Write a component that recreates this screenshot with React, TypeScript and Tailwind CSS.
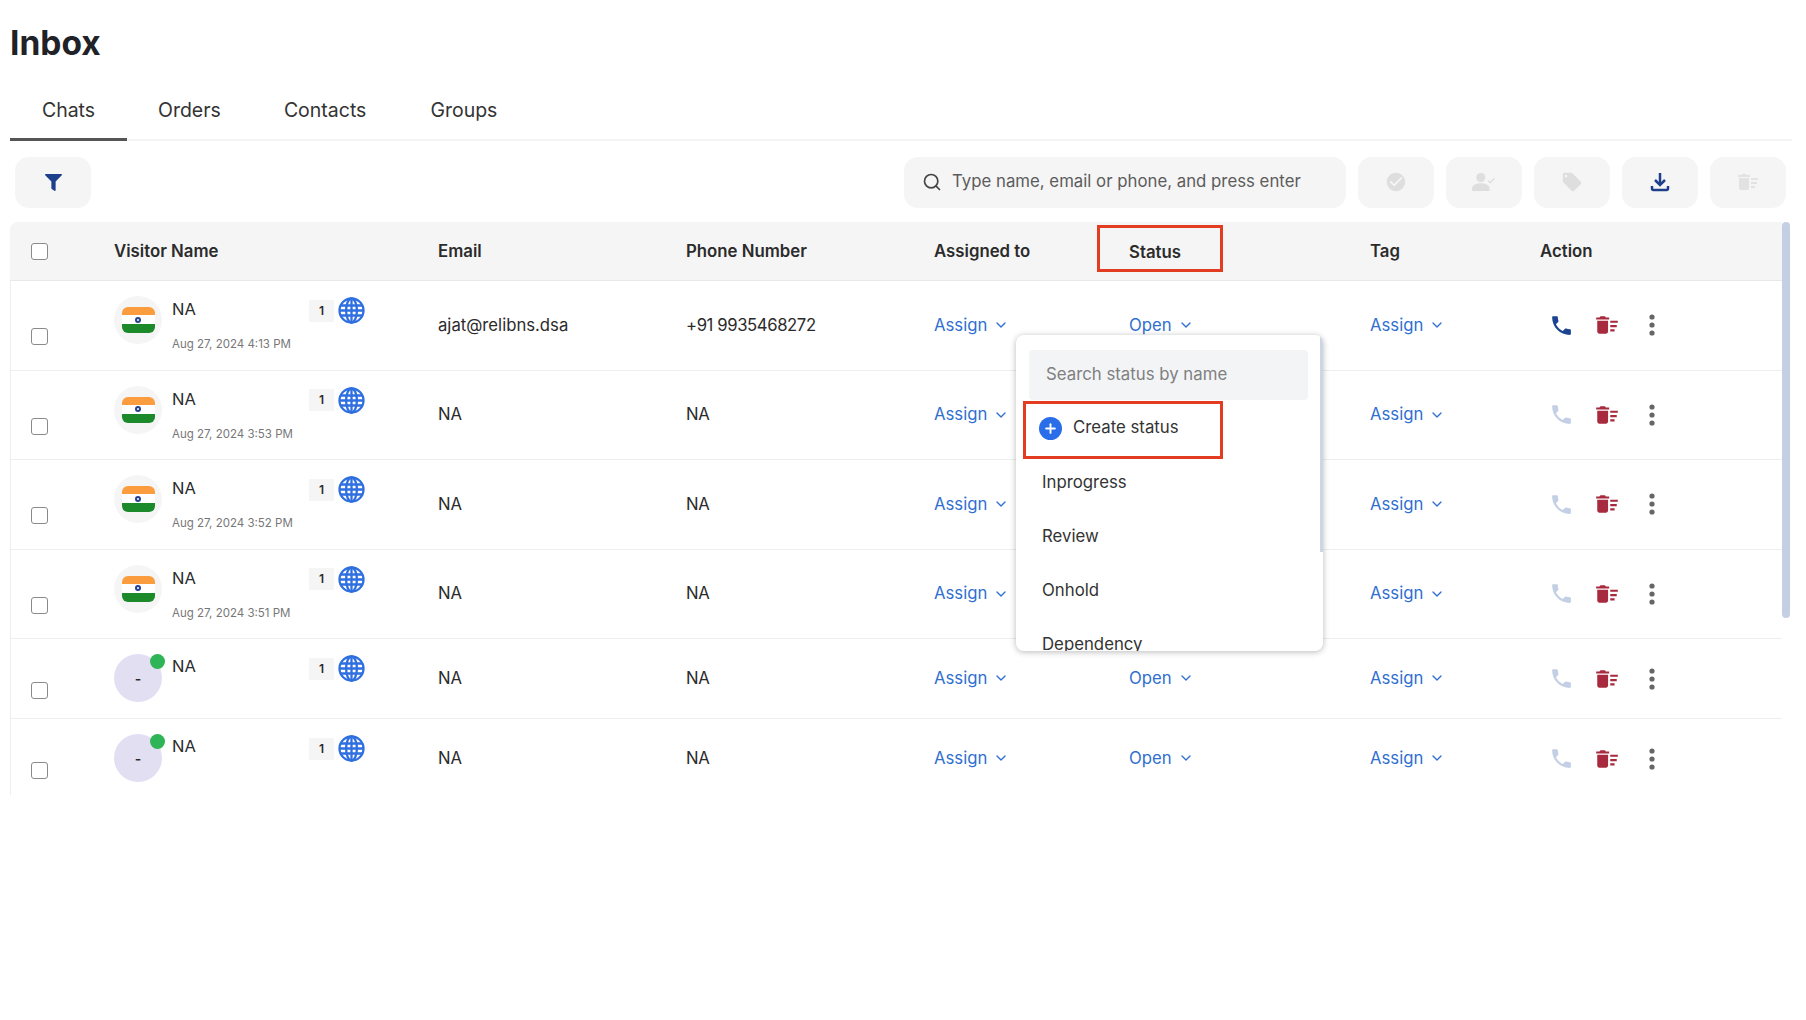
import { FaFilter } from "react-icons/fa";
import { MdCheckCircle, MdDeleteSweep, MdLocalOffer, MdPhone } from "react-icons/md";
import { ChevronDown, Plus, Search } from "lucide-react";
import type { ReactNode } from "react";

type Visitor = {
  flag: boolean;
  date?: string;
  email: string;
  phone: string;
  called: boolean;
  status: boolean;
};

const visitors: Visitor[] = [
  { flag: true, date: "Aug 27, 2024 4:13 PM", email: "ajat@relibns.dsa", phone: "+91 9935468272", called: true, status: true },
  { flag: true, date: "Aug 27, 2024 3:53 PM", email: "NA", phone: "NA", called: false, status: false },
  { flag: true, date: "Aug 27, 2024 3:52 PM", email: "NA", phone: "NA", called: false, status: false },
  { flag: true, date: "Aug 27, 2024 3:51 PM", email: "NA", phone: "NA", called: false, status: false },
  { flag: false, email: "NA", phone: "NA", called: false, status: true },
  { flag: false, email: "NA", phone: "NA", called: false, status: true },
];

const gridCols = "grid grid-cols-[104px_324px_248px_248px_195px_241px_170px_1fr]";

function Globe() {
  return (
    <svg viewBox="0 0 27 27" className="h-[27px] w-[27px] shrink-0" fill="none" stroke="#2f6fdf" strokeWidth="2.3">
      <circle cx="13.5" cy="13.5" r="12" />
      <ellipse cx="13.5" cy="13.5" rx="5.4" ry="12" />
      <path d="M13.5 1.5v24M3 8.5h21M1.5 13.5h24M3 18.5h21" />
    </svg>
  );
}

function Flag() {
  return (
    <div className="flex h-[26px] w-[33px] flex-col overflow-hidden rounded-[6px]">
      <div className="h-[8px] bg-[#fb9d3f]" />
      <div className="flex h-[9px] items-center justify-center bg-white">
        <div className="h-[6px] w-[6px] rounded-full border-[2px] border-[#27408f]" />
      </div>
      <div className="h-[9px] bg-[#1c8a2b]" />
    </div>
  );
}

function Assign({ label = "Assign" }: { label?: string }) {
  return (
    <div className="flex items-center gap-[6px] text-[16.7px] text-[#2f6fd0]">
      {label}
      <ChevronDown size={16} strokeWidth={2} />
    </div>
  );
}

function UserCheck() {
  return (
    <svg viewBox="0 0 26 22" className="h-[20px] w-[24px]" fill="#dedede">
      <circle cx="9.5" cy="6" r="5" />
      <path d="M0 21v-3c0-3.6 5-5.5 9.5-5.5S19 14.400 19 18v3z" />
      <path d="M17.500 9.500l2.300 2.300 4.700-5" fill="none" stroke="#dedede" strokeWidth="1.500" />
    </svg>
  );
}

function DownloadIcon() {
  return (
    <svg viewBox="0 0 20 20" className="h-[20px] w-[20px]" fill="none" stroke="#1d3f8c" strokeWidth="2.500">
      <path d="M10 1v10" />
      <path d="M5 8l5 5 5-5" />
      <path d="M2 14v2.500a1.500 1.500 0 0 0 1.500 1.500h13a1.500 1.500 0 0 0 1.500-1.500V14" />
    </svg>
  );
}

function Dots() {
  return (
    <svg viewBox="0 0 6 22" className="h-[22px] w-[6px]" fill="#666666">
      <circle cx="3" cy="3" r="2.600" />
      <circle cx="3" cy="11" r="2.600" />
      <circle cx="3" cy="19" r="2.600" />
    </svg>
  );
}

function ToolButton({ children }: { children: ReactNode }) {
  return (
    <div className="flex h-[51px] w-[76px] items-center justify-center rounded-[14px] bg-[#f5f5f5]">
      {children}
    </div>
  );
}

function Row({ visitor }: { visitor: Visitor }) {
  const h = visitor.date ? "h-[89.5px]" : "h-[80px]";
  return (
    <div className={`${gridCols} ${h} items-center border-b border-[#eeeeee] text-[16.7px] text-[#2b2b2b]`}>
      <div className="mt-[23px] pl-[21px]">
        <div className="h-[17px] w-[17px] rounded-[3px] border-[1.5px] border-[#8a8a8a] bg-white" />
      </div>
      <div className="flex self-start pt-[15px]">
        {visitor.flag ? (
          <div className="flex h-[48px] w-[48px] shrink-0 items-center justify-center rounded-full bg-[#f5f5f5]">
            <Flag />
          </div>
        ) : (
          <div className="relative flex h-[48px] w-[48px] shrink-0 items-center justify-center rounded-full bg-[#e3dff3] text-[14px] font-semibold">
            -
            <span className="absolute right-[-3px] top-0 h-[15px] w-[15px] rounded-full bg-[#2fb457]" />
          </div>
        )}
        <div className="ml-[10px] w-[137px] shrink-0">
          <div className={`${visitor.date ? "mt-[2px]" : "mt-[1px]"} text-[16.5px] leading-[22px]`}>NA</div>
          {visitor.date && (
            <div className="mt-[16px] text-[11.5px] leading-[16px] text-[#777777]">{visitor.date}</div>
          )}
        </div>
        <div className="mt-[1px] flex h-[27px] items-center gap-[4px]">
          <div className="flex h-[22px] w-[25px] items-center justify-center bg-[#f5f5f5] text-[12px] font-semibold">1</div>
          <Globe />
        </div>
      </div>
      <div>{visitor.email}</div>
      <div className="tracking-[-0.4px]">{visitor.phone}</div>
      <Assign />
      <div>{visitor.status && <Assign label="Open" />}</div>
      <Assign />
      <div className="flex items-center pl-[9px]">
        <MdPhone className={visitor.called ? "text-[#1b4390]" : "text-[#c3cfe4]"} size={25} />
        <MdDeleteSweep className="ml-[20px] text-[#a82a3f]" size={26} />
        <div className="ml-[29px] flex items-center">
          <Dots />
        </div>
      </div>
    </div>
  );
}

function StatusMenu() {
  return (
    <div className="absolute left-[1006px] top-[113px] flex h-[316px] w-[307px] overflow-hidden rounded-[8px] bg-white shadow-[0_1px_6px_rgba(0,0,0,0.28)]">
      <div className="min-w-0 flex-1 pl-[13px] pr-[12px] pt-[15px] text-[16.8px] text-[#333333]">
        <div className="flex h-[50px] items-center rounded-[4px] bg-[#f3f4f6] pl-[17px] text-[#808080]">Search status by name</div>
        <div className="mt-[1px] -ml-[6px] flex h-[58px] w-[200px] items-center border-[3px] border-[#e23d21] pb-[4px] pl-[13px]">
          <span className="flex h-[23px] w-[23px] items-center justify-center rounded-full bg-[#2a6de8]">
            <Plus size={15} strokeWidth={3} className="text-white" />
          </span>
          <span className="ml-[11px]">Create status</span>
        </div>
        <div className="ml-[13px] mt-[9px] flex flex-col">
          <div className="h-[54px] leading-[28px]">Inprogress</div>
          <div className="h-[54px] leading-[28px]">Review</div>
          <div className="h-[54px] leading-[28px]">Onhold</div>
          <div className="h-[54px] leading-[28px]">Dependency</div>
        </div>
      </div>
      <div className="w-[3px] shrink-0">
        <div className="h-[217px] bg-[#ccd5e6]" />
      </div>
    </div>
  );
}

export default function App() {
  return (
    <div className="min-h-[1020px] bg-white pl-[10px] pr-[14px] font-['Inter',sans-serif] text-[#2b2b2b]">
      <h1 className="pt-[23px] text-[33.5px] font-bold leading-[41px] text-[#1f2328]">Inbox</h1>

      <div className="mt-[23.5px] flex h-[53px] border-b-2 border-[#f4f4f4] text-[19.5px] text-[#333333]">
        <div className="flex h-[53px] w-[117px] justify-center border-b-[3px] border-[#555555] pt-[8px]">Chats</div>
        <div className="ml-[31px] pt-[8px]">Orders</div>
        <div className="ml-[63px] pt-[8px]">Contacts</div>
        <div className="ml-[64px] pt-[8px]">Groups</div>
      </div>

      <div className="mt-[16px] flex h-[51px] items-center pl-[5px] pr-[6px]">
        <ToolButton>
          <FaFilter className="text-[#1d3f8c]" size={17} />
        </ToolButton>
        <div className="ml-auto flex h-[51px] w-[442px] items-center rounded-[14px] bg-[#f5f5f5] pl-[18px] text-[16.8px] text-[#5c5c5c]">
          <Search size={20} className="text-[#444444]" />
          <span className="ml-[10px]">Type name, email or phone, and press enter</span>
        </div>
        <div className="ml-[12px] flex gap-[12px]">
          <ToolButton><MdCheckCircle className="text-[#dedede]" size={22} /></ToolButton>
          <ToolButton><UserCheck /></ToolButton>
          <ToolButton><MdLocalOffer className="text-[#dedede]" size={22} /></ToolButton>
          <ToolButton><DownloadIcon /></ToolButton>
          <ToolButton><MdDeleteSweep className="text-[#e2e2e2]" size={24} /></ToolButton>
        </div>
      </div>

      <div className="relative mt-[14.5px] flex h-[573px] items-start overflow-hidden">
        <div className="w-[1772px] shrink-0">
          <div className={`${gridCols} h-[59px] items-center rounded-tl-[8px] border-b border-[#e8e8e8] bg-[#f5f5f5] pt-[2px] text-[16.8px] font-semibold text-[#2b2b2b]`}>
            <div className="mb-[2px] pl-[21px]">
              <div className="h-[17px] w-[17px] rounded-[3px] border-[1.5px] border-[#8a8a8a] bg-white" />
            </div>
            <div>Visitor Name</div>
            <div>Email</div>
            <div>Phone Number</div>
            <div>Assigned to</div>
            <div className="-ml-[32px] mb-[7px] flex h-[47px] w-[126px] items-center border-[3px] border-[#e23d21] pl-[29px] pt-[8px]">Status</div>
            <div>Tag</div>
            <div>Action</div>
          </div>
          <div className="shadow-[inset_1px_0_0_#eeeeee]">
            {visitors.map((v, i) => (
              <Row key={i} visitor={v} />
            ))}
          </div>
        </div>
        <div className="h-[396px] w-[8px] shrink-0 rounded-[4px] bg-[#c5cfe3]" />
        <StatusMenu />
      </div>
    </div>
  );
}
